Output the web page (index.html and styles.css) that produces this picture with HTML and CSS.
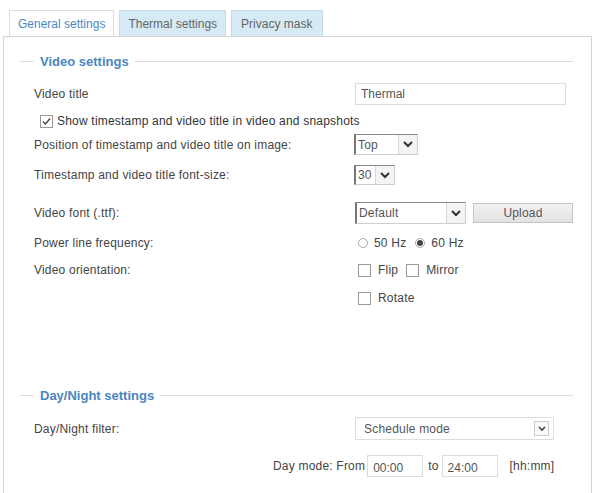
FILE: index.html
```html
<!DOCTYPE html>
<html>
    <head>
        <link rel="stylesheet" href="styles.css">
    </head>
    <body>
        <div class="tabs">
            <span class="tab active">General settings</span>
            <span class="tab">Thermal settings</span>
            <span class="tab privacy">Privacy mask</span>
        </div>
        <div class="panel">
            <div class="legend video-legend"><span class="legend-text">Video settings</span></div>

            <div class="row r-title">
                <span class="label">Video title</span>
                <input class="text-input title-input" type="text" value="Thermal">
            </div>
            <div class="row r-show">
                <span class="check checked show-check"><svg width="11" height="11" viewBox="0 0 11 11"><path d="M2 5.5 L4.5 8 L9 2.5" fill="none" stroke="#444" stroke-width="1.4"/></svg></span>
                <span class="check-text">Show timestamp and video title in video and snapshots</span>
            </div>
            <div class="row r-pos">
                <span class="label">Position of timestamp and video title on image:</span>
                <div class="sel sel-top"><span class="sel-value">Top</span><span class="arrow"><svg width="10" height="7" viewBox="0 0 10 7"><path d="M1 1 L5 5 L9 1" fill="none" stroke="#333" stroke-width="2"/></svg></span></div>
            </div>
            <div class="row r-size">
                <span class="label">Timestamp and video title font-size:</span>
                <div class="sel sel-size"><span class="sel-value">30</span><span class="arrow"><svg width="10" height="7" viewBox="0 0 10 7"><path d="M1 1 L5 5 L9 1" fill="none" stroke="#333" stroke-width="2"/></svg></span></div>
            </div>
            <div class="row r-font">
                <span class="label">Video font (.ttf):</span>
                <div class="sel sel-font"><span class="sel-value">Default</span><span class="arrow"><svg width="10" height="7" viewBox="0 0 10 7"><path d="M1 1 L5 5 L9 1" fill="none" stroke="#333" stroke-width="2"/></svg></span></div>
                <span class="button">Upload</span>
            </div>
            <div class="row r-power">
                <span class="label">Power line frequency:</span>
                <span class="radio"></span><span class="opt-text">50 Hz</span>
                <span class="radio on"></span><span class="opt-text">60 Hz</span>
            </div>
            <div class="row r-orient">
                <span class="label">Video orientation:</span>
                <span class="check box-opt"></span><span class="opt-text flip">Flip</span>
                <span class="check"></span><span class="opt-text">Mirror</span>
            </div>
            <div class="row r-rotate">
                <span class="label"></span>
                <span class="check box-opt"></span><span class="opt-text">Rotate</span>
            </div>

            <div class="legend day-legend"><span class="legend-text">Day/Night settings</span></div>

            <div class="row r-filter">
                <span class="label">Day/Night filter:</span>
                <div class="sel sel-wide"><span class="sel-value">Schedule mode</span><span class="arrow small"><svg width="8" height="6" viewBox="0 0 8 6"><path d="M1 1 L4 4 L7 1" fill="none" stroke="#444" stroke-width="1.6"/></svg></span></div>
            </div>
            <div class="row r-day">
                <span class="day-text">Day mode: From</span>
                <input class="text-input time-input" type="text" value="00:00">
                <span class="to-text">to</span>
                <input class="text-input time-input" type="text" value="24:00">
                <span class="unit-text">[hh:mm]</span>
            </div>
        </div>
    </body>
</html>
```

FILE: styles.css
```css
body {
    margin: 0;
    font-family: "Liberation Sans", Arial, sans-serif;
    font-size: 12px;
    letter-spacing: 0.2px;
    color: #444;
    background-color: white;
}
.tabs {
    display: flex;
    gap: 5px;
    margin-top: 10px;
    padding-left: 9px;
    height: 26px;
}
.tab {
    box-sizing: border-box;
    height: 26px;
    padding: 0 8px;
    display: flex;
    align-items: center;
    font-size: 12px;
    letter-spacing: 0;
    color: #666;
    background-color: #d5eaf5;
    border: 1px solid #c9dbe6;
    border-bottom: none;
}
.tab.privacy {
    padding: 0 10px 0 9px;
}
.tab.active {
    background-color: white;
    color: #4a89c0;
    border-color: #dddddd;
}
.panel {
    box-sizing: border-box;
    margin-left: 3px;
    width: 589px;
    height: 470px;
    border: 1px solid #d6d6d6;
    padding: 0 18px 0 16px;
}
.legend {
    display: flex;
    align-items: center;
    height: 16px;
}
.legend::before {
    content: "";
    width: 14px;
    border-top: 1px solid #dcdcdc;
}
.legend::after {
    content: "";
    flex: 1;
    border-top: 1px solid #dcdcdc;
}
.legend-text {
    padding: 0 6px;
    font-size: 13px;
    font-weight: bold;
    letter-spacing: 0;
    color: #4a86c0;
}
.video-legend {
    margin-top: 16px;
}
.day-legend {
    margin-top: 80px;
}
.row {
    display: flex;
    align-items: center;
    box-sizing: border-box;
    height: 18px;
    padding-left: 14px;
}
.label {
    width: 320px;
    flex-shrink: 0;
}
.r-title { margin-top: 14px; height: 22px; }
.r-show { margin-top: 7px; }
.r-pos { margin-top: 4px; height: 21px; }
.r-size { margin-top: 10px; height: 20px; }
.r-font { margin-top: 17px; height: 22px; }
.r-power { margin-top: 10px; }
.r-orient { margin-top: 9px; }
.r-rotate { margin-top: 10px; }
.r-filter { margin-top: 14px; height: 23px; }
.r-day { margin-top: 15px; height: 22px; padding-left: 253px; }

.text-input {
    box-sizing: border-box;
    height: 100%;
    border: 1px solid #dcdcdc;
    padding: 0 5px;
    font-family: inherit;
    font-size: 12px;
    color: #555;
    outline: none;
}
.title-input {
    width: 211px;
    margin-left: 1px;
}
.time-input {
    width: 56px;
    padding: 3px 5px 0;
}
.to-text {
    margin: 0 3px 0 5px;
}
.unit-text {
    margin-left: 12px;
}
.day-text {
    margin-right: 2px;
}

.check {
    box-sizing: border-box;
    width: 13px;
    height: 13px;
    border: 1px solid #999;
    display: flex;
    align-items: center;
    justify-content: center;
    background-color: white;
}
.show-check {
    margin-left: 6px;
    margin-right: 4px;
}
.box-opt {
    margin-left: 4px;
}
.check-text {
    color: #333;
}
.opt-text {
    margin: 0 7px 0 7px;
}
.flip {
    margin-right: 8px;
}
.radio {
    box-sizing: border-box;
    width: 10px;
    height: 10px;
    border: 1px solid #aaa;
    border-radius: 50%;
    margin-left: 4px;
    display: flex;
    align-items: center;
    justify-content: center;
}
.radio.on::after {
    content: "";
    width: 6px;
    height: 6px;
    border-radius: 50%;
    background-color: #444;
}
.radio + .opt-text {
    margin: 0 5px 0 6px;
}

.sel {
    box-sizing: border-box;
    height: 100%;
    display: flex;
    align-items: center;
    border: 1px solid #cfcfcf;
    border-left: 2px solid #777;
    border-top: 1px solid #888;
    background-color: white;
}
.sel-value {
    flex: 1;
    padding-left: 2px;
    color: #555;
}
.arrow {
    box-sizing: border-box;
    width: 19px;
    height: 100%;
    border-left: 1px solid #d5d5d5;
    display: flex;
    align-items: center;
    justify-content: center;
    background-color: #f4f4f4;
}
.sel-top { width: 64px; }
.sel-size { width: 41px; }
.sel-font { width: 111px; margin-left: 1px; }
.sel-wide {
    width: 199px;
    margin-left: 1px;
    border: 1px solid #dddddd;
}
.sel-wide .sel-value {
    padding-left: 8px;
}
.arrow.small {
    width: 15px;
    height: 15px;
    border: 1px solid #cccccc;
    margin-right: 4px;
    background-color: #fafafa;
}
.button {
    box-sizing: border-box;
    width: 100px;
    height: 20px;
    margin-left: 7px;
    display: flex;
    align-items: center;
    justify-content: center;
    border: 1px solid #c4c4c4;
    background: linear-gradient(#f2f2f2, #e2e2e2);
    color: #555;
}
```
